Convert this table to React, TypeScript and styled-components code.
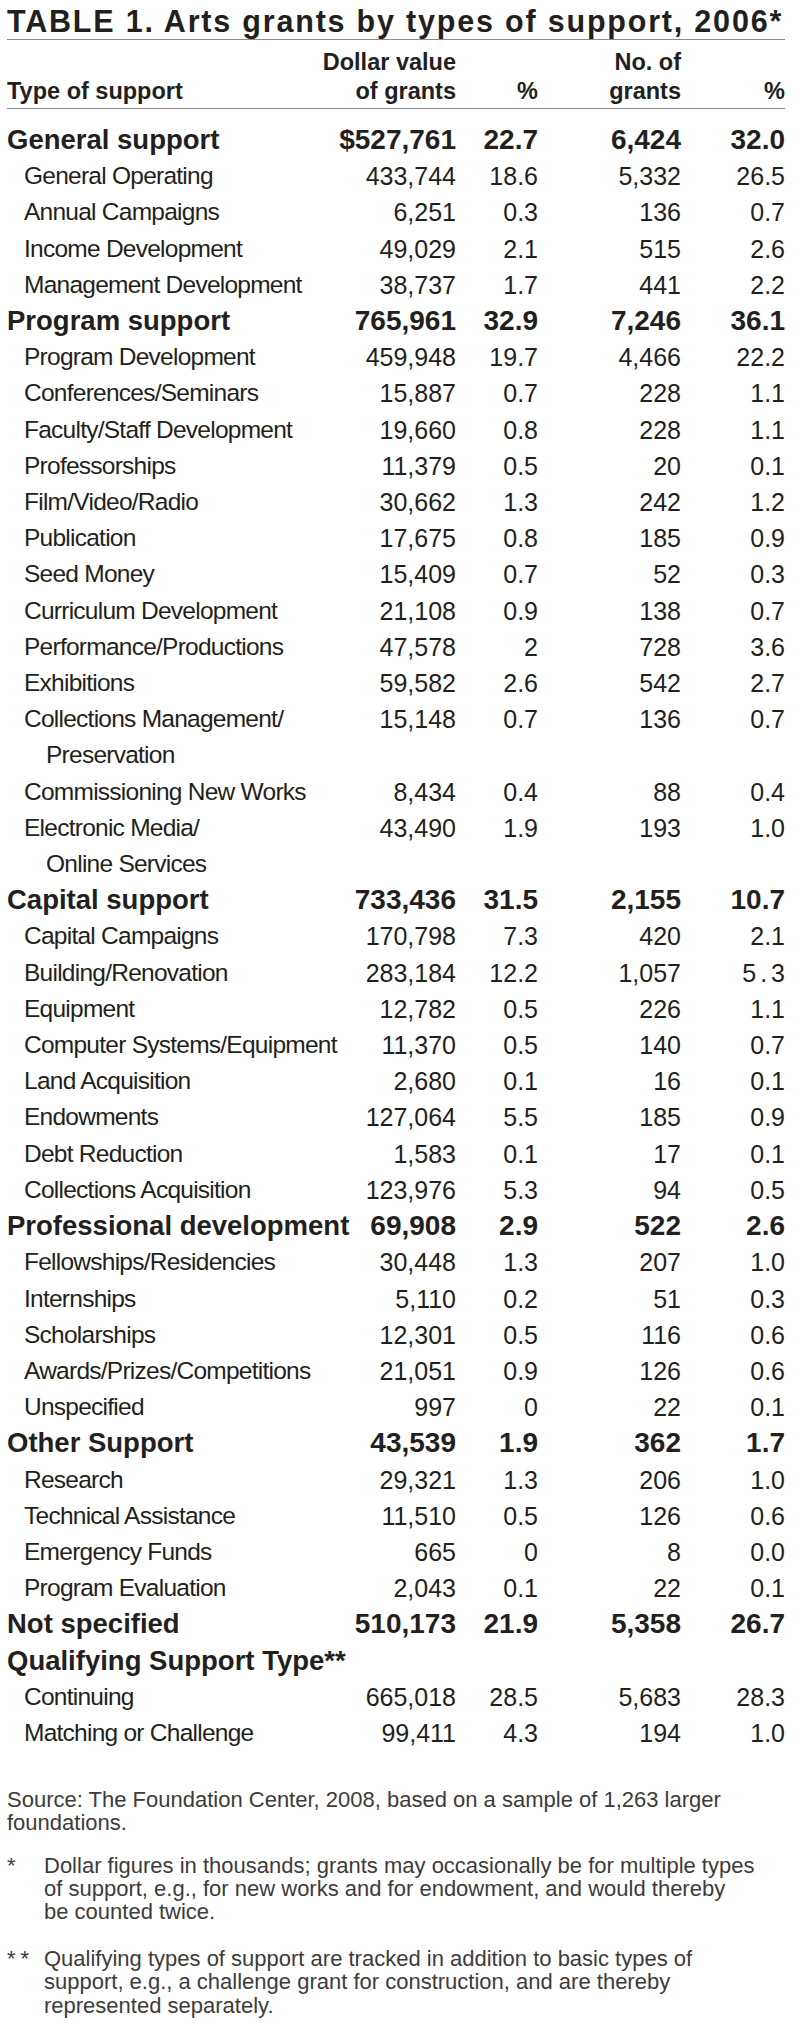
import React from "react";
import styled, { createGlobalStyle } from "styled-components";

const GlobalStyle = createGlobalStyle`
  html, body {
    margin: 0;
    padding: 0;
    background: #ffffff;
  }
  body {
    font-family: "Liberation Sans", Arial, sans-serif;
    color: #231f20;
  }
`;

const Page = styled.main`
  width: 800px;
  box-sizing: border-box;
  padding: 0 15px 0 7px;
`;

const Title = styled.h1`
  margin: 0;
  padding-top: 3px;
  font-size: 30.5px;
  line-height: 36px;
  font-weight: 700;
  letter-spacing: 1.8px;
  white-space: nowrap;
  border-bottom: 1.5px solid #8d8d8d;
`;

const columns = "minmax(0, 1fr) 136px 82px 143px 104px";

const HeaderRow = styled.div`
  display: grid;
  grid-template-columns: ${columns};
  align-items: end;
  padding: 7.5px 0 1px;
  font-size: 23.5px;
  line-height: 29.5px;
  font-weight: 700;
  border-bottom: 1.5px solid #8d8d8d;
`;

const HeadCell = styled.div<{ $right?: boolean }>`
  white-space: nowrap;
  text-align: ${(p) => (p.$right ? "right" : "left")};
`;

const Body = styled.div`
  padding-top: 13.5px;
`;

const Row = styled.div<{ $section?: boolean }>`
  display: grid;
  grid-template-columns: ${columns};
  align-items: start;
  line-height: 36.2px;
  font-size: ${(p) => (p.$section ? "28px" : "25px")};
  font-weight: ${(p) => (p.$section ? 700 : 400)};
`;

const Label = styled.div<{ $section?: boolean }>`
  white-space: nowrap;
  padding-left: ${(p) => (p.$section ? "0" : "17px")};
  font-size: ${(p) => (p.$section ? "27.5px" : "24.5px")};
  letter-spacing: ${(p) => (p.$section ? "0" : "-0.75px")};
`;

const Continuation = styled.span`
  display: block;
  padding-left: 22px;
`;

const Num = styled.div<{ $spaced?: boolean }>`
  white-space: nowrap;
  text-align: right;
  letter-spacing: ${(p) => (p.$spaced ? "4px" : "0")};
  margin-right: ${(p) => (p.$spaced ? "-4px" : "0")};
`;

const Notes = styled.section`
  margin-top: 37px;
  font-size: 22px;
  line-height: 23.3px;
  color: #3d3b3c;
`;

const Source = styled.p`
  margin: 0 0 19px;
`;

const Note = styled.div`
  display: grid;
  grid-template-columns: 37px 1fr;
  margin-bottom: 23.5px;
`;

const Mark = styled.span`
  white-space: nowrap;
  letter-spacing: 5px;
`;

type RowData = {
  label: string;
  cont?: string;
  section?: boolean;
  values?: [string, string, string, string];
  spacedLast?: boolean;
};

const rows: RowData[] = [
  { label: "General support", section: true, values: ["$527,761", "22.7", "6,424", "32.0"] },
  { label: "General Operating", values: ["433,744", "18.6", "5,332", "26.5"] },
  { label: "Annual Campaigns", values: ["6,251", "0.3", "136", "0.7"] },
  { label: "Income Development", values: ["49,029", "2.1", "515", "2.6"] },
  { label: "Management Development", values: ["38,737", "1.7", "441", "2.2"] },
  { label: "Program support", section: true, values: ["765,961", "32.9", "7,246", "36.1"] },
  { label: "Program Development", values: ["459,948", "19.7", "4,466", "22.2"] },
  { label: "Conferences/Seminars", values: ["15,887", "0.7", "228", "1.1"] },
  { label: "Faculty/Staff Development", values: ["19,660", "0.8", "228", "1.1"] },
  { label: "Professorships", values: ["11,379", "0.5", "20", "0.1"] },
  { label: "Film/Video/Radio", values: ["30,662", "1.3", "242", "1.2"] },
  { label: "Publication", values: ["17,675", "0.8", "185", "0.9"] },
  { label: "Seed Money", values: ["15,409", "0.7", "52", "0.3"] },
  { label: "Curriculum Development", values: ["21,108", "0.9", "138", "0.7"] },
  { label: "Performance/Productions", values: ["47,578", "2", "728", "3.6"] },
  { label: "Exhibitions", values: ["59,582", "2.6", "542", "2.7"] },
  { label: "Collections Management/", cont: "Preservation", values: ["15,148", "0.7", "136", "0.7"] },
  { label: "Commissioning New Works", values: ["8,434", "0.4", "88", "0.4"] },
  { label: "Electronic Media/", cont: "Online Services", values: ["43,490", "1.9", "193", "1.0"] },
  { label: "Capital support", section: true, values: ["733,436", "31.5", "2,155", "10.7"] },
  { label: "Capital Campaigns", values: ["170,798", "7.3", "420", "2.1"] },
  { label: "Building/Renovation", values: ["283,184", "12.2", "1,057", "5.3"], spacedLast: true },
  { label: "Equipment", values: ["12,782", "0.5", "226", "1.1"] },
  { label: "Computer Systems/Equipment", values: ["11,370", "0.5", "140", "0.7"] },
  { label: "Land Acquisition", values: ["2,680", "0.1", "16", "0.1"] },
  { label: "Endowments", values: ["127,064", "5.5", "185", "0.9"] },
  { label: "Debt Reduction", values: ["1,583", "0.1", "17", "0.1"] },
  { label: "Collections Acquisition", values: ["123,976", "5.3", "94", "0.5"] },
  { label: "Professional development", section: true, values: ["69,908", "2.9", "522", "2.6"] },
  { label: "Fellowships/Residencies", values: ["30,448", "1.3", "207", "1.0"] },
  { label: "Internships", values: ["5,110", "0.2", "51", "0.3"] },
  { label: "Scholarships", values: ["12,301", "0.5", "116", "0.6"] },
  { label: "Awards/Prizes/Competitions", values: ["21,051", "0.9", "126", "0.6"] },
  { label: "Unspecified", values: ["997", "0", "22", "0.1"] },
  { label: "Other Support", section: true, values: ["43,539", "1.9", "362", "1.7"] },
  { label: "Research", values: ["29,321", "1.3", "206", "1.0"] },
  { label: "Technical Assistance", values: ["11,510", "0.5", "126", "0.6"] },
  { label: "Emergency Funds", values: ["665", "0", "8", "0.0"] },
  { label: "Program Evaluation", values: ["2,043", "0.1", "22", "0.1"] },
  { label: "Not specified", section: true, values: ["510,173", "21.9", "5,358", "26.7"] },
  { label: "Qualifying Support Type**", section: true },
  { label: "Continuing", values: ["665,018", "28.5", "5,683", "28.3"] },
  { label: "Matching or Challenge", values: ["99,411", "4.3", "194", "1.0"] },
];

export default function App() {
  return (
    <>
      <GlobalStyle />
      <Page>
        <Title>TABLE 1. Arts grants by types of support, 2006*</Title>
        <HeaderRow>
          <HeadCell>Type of support</HeadCell>
          <HeadCell $right>
            Dollar value
            <br />
            of grants
          </HeadCell>
          <HeadCell $right>%</HeadCell>
          <HeadCell $right>
            No. of
            <br />
            grants
          </HeadCell>
          <HeadCell $right>%</HeadCell>
        </HeaderRow>
        <Body>
          {rows.map((r) => (
            <Row key={r.label} $section={r.section}>
              <Label $section={r.section}>
                {r.label}
                {r.cont && <Continuation>{r.cont}</Continuation>}
              </Label>
              {r.values &&
                r.values.map((v, i) => (
                  <Num key={i} $spaced={r.spacedLast && i === 3}>
                    {v}
                  </Num>
                ))}
            </Row>
          ))}
        </Body>
        <Notes>
          <Source>
            Source: The Foundation Center, 2008, based on a sample of 1,263 larger
            <br />
            foundations.
          </Source>
          <Note>
            <Mark>*</Mark>
            <span>
              Dollar figures in thousands; grants may occasionally be for multiple types
              <br />
              of support, e.g., for new works and for endowment, and would thereby
              <br />
              be counted twice.
            </span>
          </Note>
          <Note>
            <Mark>**</Mark>
            <span>
              Qualifying types of support are tracked in addition to basic types of
              <br />
              support, e.g., a challenge grant for construction, and are thereby
              <br />
              represented separately.
            </span>
          </Note>
        </Notes>
      </Page>
    </>
  );
}
